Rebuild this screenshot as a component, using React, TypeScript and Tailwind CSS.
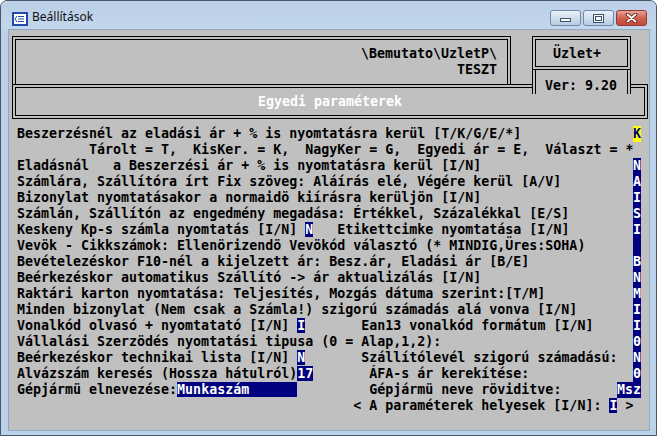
import React from "react";

type Seg = { t: string; hi?: boolean };
type Row = { segs: Seg[]; val?: string; tone?: "navy" | "yellow" };

const rows: Row[] = [
  { segs: [{ t: "Beszerzésnél az eladási ár + % is nyomtatásra kerül [T/K/G/E/*]" }], val: "K", tone: "yellow" },
  { segs: [{ t: "         Tárolt = T,  KisKer. = K,  NagyKer = G,  Egyedi ár = E,  Választ = *" }] },
  { segs: [{ t: "Eladásnál   a Beszerzési ár + % is nyomtatásra kerül [I/N]" }], val: "N", tone: "navy" },
  { segs: [{ t: "Számlára, Szállítóra írt Fix szöveg: Aláírás elé, Végére kerül [A/V]" }], val: "A", tone: "navy" },
  { segs: [{ t: "Bizonylat nyomtatásakor a normaidö kiírásra kerüljön [I/N]" }], val: "I", tone: "navy" },
  { segs: [{ t: "Számlán, Szállítón az engedmény megadása: Értékkel, Százalékkal [E/S]" }], val: "S", tone: "navy" },
  {
    segs: [{ t: "Keskeny Kp-s számla nyomtatás [I/N] " }, { t: "N", hi: true }, { t: "   Etikettcimke nyomtatása [I/N]" }],
    val: "I",
    tone: "navy",
  },
  { segs: [{ t: "Vevök - Cikkszámok: Ellenörizendö Vevökód választó (* MINDIG,Üres:SOHA)" }], val: " ", tone: "navy" },
  { segs: [{ t: "Bevételezéskor F10-nél a kijelzett ár: Besz.ár, Eladási ár [B/E]" }], val: "B", tone: "navy" },
  { segs: [{ t: "Beérkezéskor automatikus Szállító -> ár aktualizálás [I/N]" }], val: "N", tone: "navy" },
  { segs: [{ t: "Raktári karton nyomtatása: Teljesítés, Mozgás dátuma szerint:[T/M]" }], val: "M", tone: "navy" },
  { segs: [{ t: "Minden bizonylat (Nem csak a Számla!) szigorú számadás alá vonva [I/N]" }], val: "I", tone: "navy" },
  {
    segs: [{ t: "Vonalkód olvasó + nyomtatató [I/N] " }, { t: "I", hi: true }, { t: "       Ean13 vonalkód formátum [I/N]" }],
    val: "I",
    tone: "navy",
  },
  { segs: [{ t: "Vállalási Szerzödés nyomtatási tipusa (0 = Alap,1,2):" }], val: "0", tone: "navy" },
  {
    segs: [{ t: "Beérkezéskor technikai lista [I/N] " }, { t: "N", hi: true }, { t: "       Szállítólevél szigorú számadású:" }],
    val: "N",
    tone: "navy",
  },
  {
    segs: [{ t: "Alvázszám keresés (Hossza hátulról)" }, { t: "17", hi: true }, { t: "       ÁFA-s ár kerekítése:" }],
    val: "0",
    tone: "navy",
  },
  {
    segs: [{ t: "Gépjármü elnevezése:" }, { t: "Munkaszám      ", hi: true }, { t: "         Gépjármü neve röviditve:" }],
    val: "Msz",
    tone: "navy",
  },
  {
    segs: [{ t: "                                          < A paraméterek helyesek [I/N]: " }, { t: "I", hi: true }, { t: " >" }],
  },
  { segs: [{ t: "" }] },
];

function DoubleBox({ className, inner, children }: { className: string; inner?: string; children?: React.ReactNode }) {
  return (
    <div className={`border border-black p-[2px] ${className}`}>
      <div className={`h-full border border-black ${inner ?? ""}`}>{children}</div>
    </div>
  );
}

function TitleIcon() {
  return (
    <svg width="16" height="14" viewBox="0 0 16 14" className="shrink-0">
      <rect x="0" y="0" width="16" height="14" fill="#2349ad" />
      <rect x="2" y="2" width="12" height="10" fill="#ffffff" />
      <path d="M6 4.5h6M6 7h6M6 9.5h6" stroke="#2349ad" strokeWidth="1" />
      <path d="M5 4L3 7l2 3" stroke="#2349ad" strokeWidth="1" fill="none" />
    </svg>
  );
}

function WinButtons() {
  return (
    <div className="ml-auto mr-[9px] mt-[9px] flex gap-[2px]">
      <div className="w-[31px] h-[16px] rounded-[3px] border border-[#6f88aa] bg-gradient-to-b from-[#eaf1f9] to-[#b8cce4] flex items-end justify-center pb-[3px]">
        <div className="w-[11px] h-[4px] bg-white border border-[#3f5069]" />
      </div>
      <div className="w-[31px] h-[16px] rounded-[3px] border border-[#6f88aa] bg-gradient-to-b from-[#eaf1f9] to-[#b8cce4] flex items-center justify-center">
        <div className="w-[11px] h-[9px] bg-white border border-[#3f5069] p-[1px]">
          <div className="w-full h-full border border-[#3f5069]" />
        </div>
      </div>
      <div className="w-[31px] h-[16px] rounded-[3px] border border-[#8e3a32] bg-gradient-to-b from-[#e8a496] via-[#d0604f] to-[#c4483a] flex items-center justify-center">
        <svg width="13" height="10" viewBox="0 0 13 10">
          <path d="M2.5 1.5l8 7M10.5 1.5l-8 7" stroke="#5a2520" strokeWidth="3.6" strokeLinecap="round" />
          <path d="M2.5 1.5l8 7M10.5 1.5l-8 7" stroke="#ffffff" strokeWidth="1.8" strokeLinecap="round" />
        </svg>
      </div>
    </div>
  );
}

export default function App() {
  const mono = "font-['DejaVu_Sans_Mono',monospace] font-bold text-[13.3px] leading-4";
  return (
    <div className="w-[657px] h-[436px] border border-[#45556a] rounded-t-[7px] bg-[#bcd2ea] overflow-hidden flex flex-col">
      <div className="h-[28px] shrink-0 flex items-start bg-gradient-to-b from-[#bccfe6] to-[#c2d6ec]">
        <div className="ml-[11px] mt-[11px]">
          <TitleIcon />
        </div>
        <span className="ml-[4px] mt-[8px] text-[12px] leading-4 text-[#111] font-['Noto_Sans',sans-serif]">
          Beállítások
        </span>
        <WinButtons />
      </div>

      <div className="flex h-[402px] shrink-0">
        <div className="w-[7px] shrink-0" />
        <div className="w-[642px] h-[402px] shrink-0 border border-[#91a7c2]">
          <div className={`w-[640px] h-[400px] bg-[#c0c0c0] text-black ${mono}`}>
            {/* header boxes */}
            <div className="h-[96px] pl-[3px] pt-[6px]">
              <div className="flex items-start h-[48px]">
                <div className="w-[499px] h-[48px] border-x border-t border-black px-[2px] pt-[2px]">
                  <div className="h-full border-x border-t border-black pt-[6px] pr-[10px] text-right whitespace-pre">
                    <div>{"\\Bemutato\\UzletP\\"}</div>
                    <div>TESZT</div>
                  </div>
                </div>
                <div className="relative z-10 ml-[21px] w-[99px] h-[58px] bg-[#c0c0c0] flex flex-col">
                  <DoubleBox className="h-[34px] shrink-0" inner="pt-[6px] pl-[17px]">
                    Üzlet+
                  </DoubleBox>
                  <div className="flex-1 border-x border-black px-[2px]">
                    <div className="h-full border-x border-black pt-[8px] pl-[9px] whitespace-pre">Ver: 9.20</div>
                  </div>
                </div>
              </div>
              <DoubleBox className="w-[636px] h-[35px]" inner="pt-[6px] text-center text-white">
                Egyedi paraméterek
              </DoubleBox>
            </div>

            {/* parameter rows */}
            <div className="flex flex-col">
              {rows.map((r, i) => (
                <div key={i} className="flex h-4 w-[640px] px-2">
                  <div className="flex-1 whitespace-pre">
                    {r.segs.map((s, j) => (
                      <span key={j} className={s.hi ? "bg-[#000080] text-white" : ""}>
                        {s.t}
                      </span>
                    ))}
                  </div>
                  <div
                    className={`${r.val && r.val.length > 1 ? "w-6" : "w-2"} whitespace-pre ${
                      r.tone === "yellow"
                        ? "bg-[#ffff00] text-[#000080]"
                        : r.tone === "navy"
                        ? "bg-[#000080] text-white"
                        : ""
                    }`}
                  >
                    {r.val ?? ""}
                  </div>
                </div>
              ))}
            </div>
          </div>
        </div>
        <div className="flex-1" />
      </div>
    </div>
  );
}
